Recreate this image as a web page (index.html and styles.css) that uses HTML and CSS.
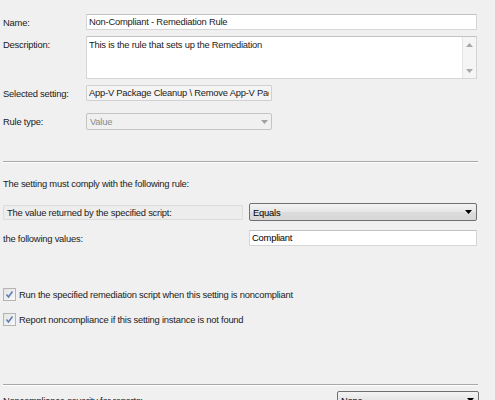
FILE: index.html
```html
<!DOCTYPE html>
<html>
<head>
<meta charset="utf-8">
<link rel="stylesheet" href="styles.css">
</head>
<body>
<div class="page">
  <div class="row row-name">
    <div class="lbl">Name:</div>
    <div class="tb fld">Non-Compliant - Remediation Rule</div>
  </div>
  <div class="row row-desc">
    <div class="lbl lbl-top">Description:</div>
    <div class="tb fld desc">
      <div class="desc-text">This is the rule that sets up the Remediation</div>
      <div class="vscroll">
        <svg width="7" height="4" viewBox="0 0 7 4"><path d="M0 4 L3.5 0 L7 4 Z" fill="#a8a8a8"/></svg>
        <svg width="7" height="4" viewBox="0 0 7 4"><path d="M0 0 L7 0 L3.5 4 Z" fill="#a8a8a8"/></svg>
      </div>
    </div>
  </div>
  <div class="row row-sel">
    <div class="lbl">Selected setting:</div>
    <div class="tb ro short"><span class="clip">App-V Package Cleanup \ Remove App-V Package</span></div>
  </div>
  <div class="row row-rule">
    <div class="lbl">Rule type:</div>
    <div class="combo disabled short">
      <span>Value</span>
      <svg width="7" height="4" viewBox="0 0 7 4"><path d="M0 0 L7 0 L3.5 4 Z" fill="#a0a0a0"/></svg>
    </div>
  </div>
  <div class="sep sep1"></div>
  <div class="heading">The setting must comply with the following rule:</div>
  <div class="row2 r-op">
    <div class="graybox">The value returned by the specified script:</div>
    <div class="combo eq">
      <span>Equals</span>
      <svg width="7" height="4" viewBox="0 0 7 4"><path d="M0 0 L7 0 L3.5 4 Z" fill="#000"/></svg>
    </div>
  </div>
  <div class="row2 r-val">
    <div class="lbl2">the following values:</div>
    <div class="tb">Compliant</div>
  </div>
  <div class="chk c1">
    <span class="box"><svg width="11" height="11" viewBox="0 0 11 11"><path d="M2.5 5.5 L4.5 8 L8.5 2.5" fill="none" stroke="#5b7fb8" stroke-width="1.6"/></svg></span>
    <span>Run the specified remediation script when this setting is noncompliant</span>
  </div>
  <div class="chk c2">
    <span class="box"><svg width="11" height="11" viewBox="0 0 11 11"><path d="M2.5 5.5 L4.5 8 L8.5 2.5" fill="none" stroke="#5b7fb8" stroke-width="1.6"/></svg></span>
    <span>Report noncompliance if this setting instance is not found</span>
  </div>
  <div class="sep sep2"></div>
  <div class="row3 r-sev">
    <div class="lbl3">Noncompliance severity for reports:</div>
    <div class="combo sev">
      <span>None</span>
      <svg width="7" height="4" viewBox="0 0 7 4"><path d="M0 0 L7 0 L3.5 4 Z" fill="#000"/></svg>
    </div>
  </div>
</div>
</body>
</html>
```

FILE: styles.css
```css
html, body {
  margin: 0;
  padding: 0;
  background: #f0f0f0;
}
body {
  width: 495px;
  height: 400px;
  overflow: hidden;
  font-family: "Liberation Sans", Arial, sans-serif;
  font-size: 9.4px;
  letter-spacing: -0.22px;
  color: #1b1b1b;
}
.page {
  padding-left: 3px;
  width: 474px;
  display: flex;
  flex-direction: column;
}
.row {
  display: grid;
  grid-template-columns: 83px 391px;
  align-items: center;
}
.lbl { line-height: 13px; }
.lbl-top { align-self: start; padding-top: 2px; }
.tb {
  box-sizing: border-box;
  background: #fff;
  border: 1px solid #d5d5d5;
  border-top-color: #c2c2c2;
  border-radius: 1px;
  padding: 0 2px;
  line-height: 14px;
  white-space: nowrap;
  overflow: hidden;
}
.row-name { margin-top: 14px; height: 16px; }
.row-name .tb { height: 16px; }
.row-desc { margin-top: 6px; height: 43px; align-items: stretch; }
.desc {
  display: flex;
  padding: 0;
}
.desc-text {
  flex: 1;
  padding: 1px 2px;
  line-height: 13px;
}
.vscroll {
  width: 14px;
  background: #f5f5f5;
  border-left: 1px solid #e6e6e6;
  display: flex;
  flex-direction: column;
  align-items: center;
  justify-content: space-between;
  padding: 6px 0 5px;
  box-sizing: border-box;
}
.vscroll svg { display: block; }
.row-sel { margin-top: 6px; height: 16px; }
.short { width: 186px; }
.ro {
  height: 16px;
  background: #f4f4f4;
  border-color: #d0d0d0;
}
.clip { display: block; overflow: hidden; white-space: nowrap; }
.row-rule { margin-top: 12px; height: 17px; }
.combo {
  box-sizing: border-box;
  display: flex;
  align-items: center;
  justify-content: space-between;
  padding: 0 4px 0 3px;
  border-radius: 2px;
  line-height: 13px;
  white-space: nowrap;
}
.combo svg { display: block; }
.disabled {
  height: 17px;
  background: #f0f0f0;
  border: 1px solid #c4c4c4;
  color: #8a8a8a;
  padding-right: 3px;
}
.sep {
  height: 1px;
  background: #a8a8a8;
  border-bottom: 1px solid #fdfdfd;
  width: 475px;
}
.sep1 { margin-top: 31px; }
.heading { margin-top: 14px; line-height: 13px; }
.row2 {
  display: grid;
  grid-template-columns: 240px 228px;
  column-gap: 6px;
  align-items: center;
}
.r-op { margin-top: 13px; height: 18px; }
.graybox {
  box-sizing: border-box;
  height: 15px;
  background: #ededed;
  border: 1px solid #dcdcdc;
  border-radius: 1px;
  padding: 0 3px;
  line-height: 13px;
}
.eq, .sev {
  height: 18px;
  border: 1px solid #707070;
  background: linear-gradient(#f3f3f3, #e6e6e6 50%, #dcdcdc 51%, #d8d8d8);
  color: #000;
}
.r-val { margin-top: 9px; height: 16px; }
.r-val .tb { height: 16px; color: #000; }
.lbl2 { line-height: 13px; }
.chk {
  display: flex;
  align-items: center;
  gap: 2px;
  height: 13px;
  line-height: 13px;
}
.c1 { margin-top: 42px; }
.c2 { margin-top: 12px; }
.box {
  box-sizing: border-box;
  width: 13px;
  height: 13px;
  border: 1px solid #b4b4b4;
  background: linear-gradient(135deg, #e4e4e4, #f8f8f8);
  display: flex;
  align-items: center;
  justify-content: center;
  margin-right: 1px;
}
.box svg { display: block; }
.sep2 { margin-top: 58px; }
.row3 {
  display: flex;
  justify-content: space-between;
  align-items: flex-start;
  margin-top: 5px;
}
.lbl3 { padding-top: 3px; line-height: 13px; }
.sev { width: 142px; margin-right: -2px; }
```
